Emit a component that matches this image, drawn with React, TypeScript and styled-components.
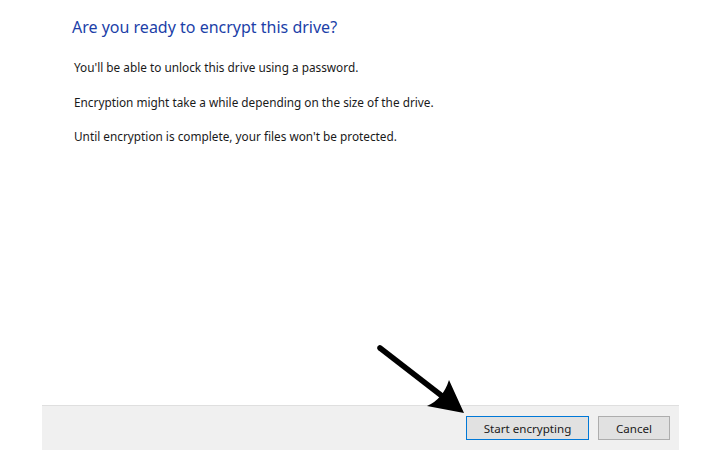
import { createGlobalStyle, styled } from "styled-components";

const GlobalStyle = createGlobalStyle`
    html, body {
        margin:0;
        padding:0;
        background:#ffffff;
    }
    body {
        font-family: "Noto Sans", "Open Sans", sans-serif;
    }
`;

const Page = styled.div`
    position:relative;
    width:720px;
    height:450px;
    display:flex;
    flex-direction:column;
    background:#ffffff;
    overflow:hidden;
`;

const Content = styled.div`
    flex:1;
    display:flex;
    flex-direction:column;
    padding:15px 0 0 72px;
`;

const Title = styled.h1`
    margin:0 0 19px 0;
    font-family: "Noto Sans", sans-serif;
    font-weight:400;
    font-size:16px;
    line-height:24px;
    color:#1c3fa8;
`;

const Paragraph = styled.p`
    margin:0 0 16.5px 2px;
    font-family: "Noto Sans", sans-serif;
    font-size:11.8px;
    line-height:18px;
    color:#1a1a1a;
`;

const Footer = styled.div`
    margin-left:42px;
    width:637px;
    height:45px;
    box-sizing:border-box;
    border-top:1px solid #dfdfdf;
    background:#f0f0f0;
    display:flex;
    justify-content:flex-end;
    align-items:flex-start;
    gap:9px;
    padding:10px 9px 0 0;
`;

const Button = styled.button<{ $primary?: boolean }>`
    height:24px;
    min-width:${(p) => (p.$primary ? "123px" : "72px")};
    box-sizing:border-box;
    padding:0 12px;
    background:#e1e1e1;
    border:1px solid ${(p) => (p.$primary ? "#0078d7" : "#adadad")};
    font-family: "Noto Sans", sans-serif;
    font-size:11.6px;
    color:#1a1a1a;
    cursor:pointer;
`;

const Pointer = styled.svg`
    position:absolute;
    left:370px;
    top:340px;
    width:100px;
    height:80px;
`;

export default function App(){
    return (
        <Page>
            <GlobalStyle />
            <Content>
                <Title>Are you ready to encrypt this drive?</Title>
                <Paragraph>You'll be able to unlock this drive using a password.</Paragraph>
                <Paragraph>Encryption might take a while depending on the size of the drive.</Paragraph>
                <Paragraph>Until encryption is complete, your files won't be protected.</Paragraph>
            </Content>
            <Footer>
                <Button $primary>Start encrypting</Button>
                <Button>Cancel</Button>
            </Footer>
            <Pointer viewBox="0 0 100 80">
                <line x1="10" y1="8" x2="72" y2="56" stroke="#000" strokeWidth="5.5" strokeLinecap="round" />
                <path d="M94,73 L79,40 Q73,59 57,66 Z" fill="#000" />
            </Pointer>
        </Page>
    )
}
